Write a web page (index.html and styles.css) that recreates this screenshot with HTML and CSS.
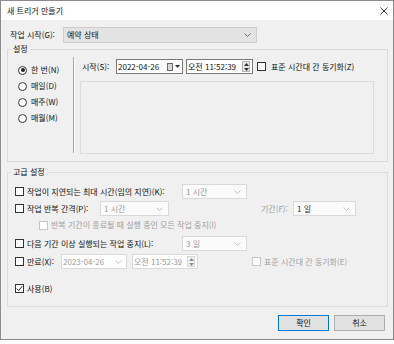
FILE: index.html
```html
<!DOCTYPE html>
<html lang="ko">
<head>
    <meta charset="UTF-8">
    <title>새 트리거 만들기</title>
    <link rel="stylesheet" href="styles.css">
</head>
<body>
<div class="dialog">
    <div class="titlebar">
        <span>새 트리거 만들기</span>
        <svg class="close" width="8" height="8" viewBox="0 0 8 8"><path d="M0.5 0.5 L7.5 7.5 M7.5 0.5 L0.5 7.5" stroke="#222" stroke-width="0.9"/></svg>
    </div>

    <div class="body">
        <!-- 작업 시작 -->
        <div class="start-row">
            <label>작업 시작(G):</label>
            <div class="combo combo-active start-combo">
                <span>예약 상태</span>
                <svg width="7" height="4"><polyline points="0.5,0.5 3.5,3.5 6.5,0.5" fill="none" stroke="#6a6a6a"/></svg>
            </div>
        </div>

        <fieldset class="group">
            <legend>설정</legend>
            <div class="settings">
                <div class="radios">
                    <div class="radio-row"><span class="radio on"></span>한 번(N)</div>
                    <div class="radio-row"><span class="radio"></span>매일(D)</div>
                    <div class="radio-row"><span class="radio"></span>매주(W)</div>
                    <div class="radio-row"><span class="radio"></span>매월(M)</div>
                </div>
                <div class="divider"></div>
                <div class="schedule">
                    <div class="sched-row">
                        <label class="start-label">시작(S):</label>
                        <div class="field date">
                            <span>2022-04-26</span>
                            <span class="cal"><span class="cal-box"></span><svg width="5" height="3"><polygon points="0,0 5,0 2.5,3" fill="#333"/></svg></span>
                        </div>
                        <div class="field time">
                            <span>오전 11:52:39</span>
                            <span class="spin"><svg width="5" height="3"><polygon points="0,3 5,3 2.5,0" fill="#333"/></svg><svg width="5" height="3"><polygon points="0,0 5,0 2.5,3" fill="#333"/></svg></span>
                        </div>
                        <span class="chk sync-chk"></span>
                        <span class="sync-text">표준 시간대 간 동기화(Z)</span>
                    </div>
                    <div class="panel"></div>
                </div>
            </div>
        </fieldset>

        <fieldset class="group advanced-group">
            <legend>고급 설정</legend>
            <div class="advanced">
                <div class="adv-row">
                    <div class="check-label w-long"><span class="chk"></span>작업이 지연되는 최대 시간(임의 지연)(K):</div>
                    <div class="combo combo-off w-small">
                        <span>1 시간</span>
                        <svg width="7" height="4"><polyline points="0.5,0.5 3.5,3.5 6.5,0.5" fill="none" stroke="#c4c4c4"/></svg>
                    </div>
                </div>
                <div class="adv-row row2">
                    <div class="check-label w-repeat"><span class="chk"></span>작업 반복 간격(P):</div>
                    <div class="combo combo-off w-repeat-combo">
                        <span>1 시간</span>
                        <svg width="7" height="4"><polyline points="0.5,0.5 3.5,3.5 6.5,0.5" fill="none" stroke="#c4c4c4"/></svg>
                    </div>
                    <span class="muted period-label">기간(F):</span>
                    <div class="combo combo-off w-period">
                        <span class="dark">1 일</span>
                        <svg width="7" height="4"><polyline points="0.5,0.5 3.5,3.5 6.5,0.5" fill="none" stroke="#c4c4c4"/></svg>
                    </div>
                </div>
                <div class="adv-row row3">
                    <span class="chk chk-off"></span><span class="muted">반복 기간이 종료될 때 실행 중인 모든 작업 중지(I)</span>
                </div>
                <div class="adv-row row4">
                    <div class="check-label w-long"><span class="chk"></span>다음 기간 이상 실행되는 작업 중지(L):</div>
                    <div class="combo combo-off w-small">
                        <span>3 일</span>
                        <svg width="7" height="4"><polyline points="0.5,0.5 3.5,3.5 6.5,0.5" fill="none" stroke="#c4c4c4"/></svg>
                    </div>
                </div>
                <div class="adv-row row5">
                    <div class="check-label w-expire"><span class="chk"></span>만료(X):</div>
                    <div class="field field-off date-off">
                        <span>2023-04-26</span>
                        <svg width="7" height="4"><polyline points="0.5,0.5 3.5,3.5 6.5,0.5" fill="none" stroke="#c4c4c4"/></svg>
                    </div>
                    <div class="field field-off time-off">
                        <span>오전 11:52:39</span>
                        <span class="spin spin-off"><svg width="5" height="3"><polygon points="0,3 5,3 2.5,0" fill="#8a8a8a"/></svg><svg width="5" height="3"><polygon points="0,0 5,0 2.5,3" fill="#8a8a8a"/></svg></span>
                    </div>
                    <span class="chk chk-off expire-sync"></span><span class="muted">표준 시간대 간 동기화(E)</span>
                </div>
                <div class="adv-row row6">
                    <span class="chk checked"><svg width="7" height="7" viewBox="0 0 7 7"><polyline points="0.8,3.6 2.7,5.5 6.3,1.2" fill="none" stroke="#222" stroke-width="1"/></svg></span>사용(B)
                </div>
            </div>
        </fieldset>

        <div class="buttons">
            <button class="btn primary">확인</button>
            <button class="btn">취소</button>
        </div>
    </div>
</div>
</body>
</html>
```

FILE: styles.css
```css
* {
    box-sizing: border-box;
}

body {
    margin: 0;
    background: #ffffff;
    font-family: "Noto Sans CJK KR", "Noto Sans", sans-serif;
    font-size: 8px;
    line-height: 12px;
    color: #111;
}

.dialog {
    width: 394px;
    height: 340px;
    border: 1px solid #8c8c8c;
    background: #f0f0f0;
    display: flex;
    flex-direction: column;
}

.titlebar {
    height: 19px;
    background: #ffffff;
    display: flex;
    align-items: center;
    justify-content: space-between;
    padding: 0 5px 0 6px;
}

.body {
    flex: 1;
    padding: 0 5px 0 6px;
}

/* 작업 시작 줄 */
.start-row {
    display: flex;
    align-items: center;
    height: 16px;
    margin-top: 7px;
    padding-left: 3px;
}

.start-row label {
    width: 53px;
}

.combo {
    display: flex;
    align-items: center;
    justify-content: space-between;
    height: 15px;
    padding: 0 5px 0 3px;
}

.combo-active {
    background: #e3e3e3;
    border: 1px solid #cdcdcd;
}

.start-combo {
    width: 194px;
    height: 16px;
}

.combo-off {
    background: #fbfbfb;
    border: 1px solid #d9d9d9;
    color: #9a9a9a;
}

.combo-off .dark {
    color: #333;
}

/* 그룹 상자 */
.group {
    margin: 0;
    padding: 0;
    border: 1px solid #dcdcdc;
    min-width: 0;
}

.group legend {
    padding: 0 2px;
    margin-left: 3px;
    line-height: 12px;
}

.advanced-group {
    margin-top: 4px;
}

.settings {
    display: flex;
    padding: 2px 0 7px 0;
}

.radios {
    width: 65px;
    padding: 5px 0 0 10px;
}

.radio-row {
    display: flex;
    align-items: center;
    height: 16px;
}

.radio {
    width: 9px;
    height: 9px;
    border: 1px solid #333;
    border-radius: 50%;
    background: #fff;
    margin-right: 4px;
    display: flex;
    align-items: center;
    justify-content: center;
}

.radio.on::after {
    content: "";
    width: 4px;
    height: 4px;
    border-radius: 50%;
    background: #222;
}

.divider {
    width: 2px;
    height: 96px;
    border-left: 1px solid #a8a8a8;
    border-right: 1px solid #ffffff;
}

.schedule {
    margin-left: 5px;
    width: 294px;
}

.sched-row {
    display: flex;
    align-items: center;
    height: 15px;
    margin-top: 2px;
    padding-left: 2px;
}

.start-label {
    width: 34px;
}

.field {
    display: flex;
    align-items: center;
    justify-content: space-between;
    height: 15px;
    background: #fff;
    border: 1px solid #7a7a7a;
    padding: 0 2px 0 1px;
}

.field.date {
    width: 67px;
}

.field.time {
    width: 67px;
    margin-left: 3px;
}

.cal {
    display: flex;
    align-items: center;
    gap: 2px;
}

.cal-box {
    width: 6px;
    height: 8px;
    background: #d8d8d8;
    border: 1px solid #6a6a6a;
}

.spin {
    display: flex;
    flex-direction: column;
    align-items: center;
    justify-content: center;
    gap: 2px;
    width: 8px;
    height: 11px;
    background: #e8e8e8;
    border: 1px solid #b5b5b5;
}

.spin-off {
    background: #f4f4f4;
    border-color: #d5d5d5;
}

.chk {
    flex: none;
    width: 9px;
    height: 9px;
    border: 1px solid #333;
    background: #fff;
    margin-right: 3px;
    display: flex;
    align-items: center;
    justify-content: center;
}

.chk-off {
    border-color: #c6c6c6;
}

.sync-chk {
    margin-left: 4px;
    margin-right: 5px;
}

.panel {
    margin-top: 7px;
    height: 73px;
    border: 1px solid #dcdcdc;
}

/* 고급 설정 */
.advanced {
    padding: 6px 0 10px 7px;
}

.adv-row {
    display: flex;
    align-items: center;
    height: 15px;
}

.row2 {
    margin-top: 2px;
}

.row3 {
    margin-top: 2px;
    height: 14px;
    padding-left: 24px;
}

.row4 {
    margin-top: 4px;
}

.row5 {
    margin-top: 3px;
}

.row6 {
    margin-top: 12px;
}

.check-label {
    display: flex;
    align-items: center;
}

.w-long {
    width: 167px;
}

.w-small {
    width: 65px;
}

.w-repeat {
    width: 85px;
}

.w-repeat-combo {
    width: 69px;
}

.period-label {
    margin-left: 92px;
    width: 32px;
}

.w-period {
    width: 63px;
}

.w-expire {
    width: 46px;
}

.field-off {
    border-color: #d9d9d9;
    color: #9a9a9a;
    padding-right: 4px;
}

.date-off {
    width: 66px;
}

.time-off {
    width: 66px;
    margin-left: 5px;
    padding-right: 2px;
}

.expire-sync {
    margin-left: 54px;
}

.muted {
    color: #a0a0a0;
}

/* 버튼 */
.buttons {
    display: flex;
    justify-content: flex-end;
    gap: 5px;
    margin-top: 8px;
    padding-right: 3px;
}

.btn {
    width: 51px;
    height: 16px;
    padding: 0;
    font-family: inherit;
    font-size: 8px;
    line-height: 12px;
    color: #111;
    background: #e1e1e1;
    border: 1px solid #adadad;
}

.btn.primary {
    border-color: #0078d7;
}
```
